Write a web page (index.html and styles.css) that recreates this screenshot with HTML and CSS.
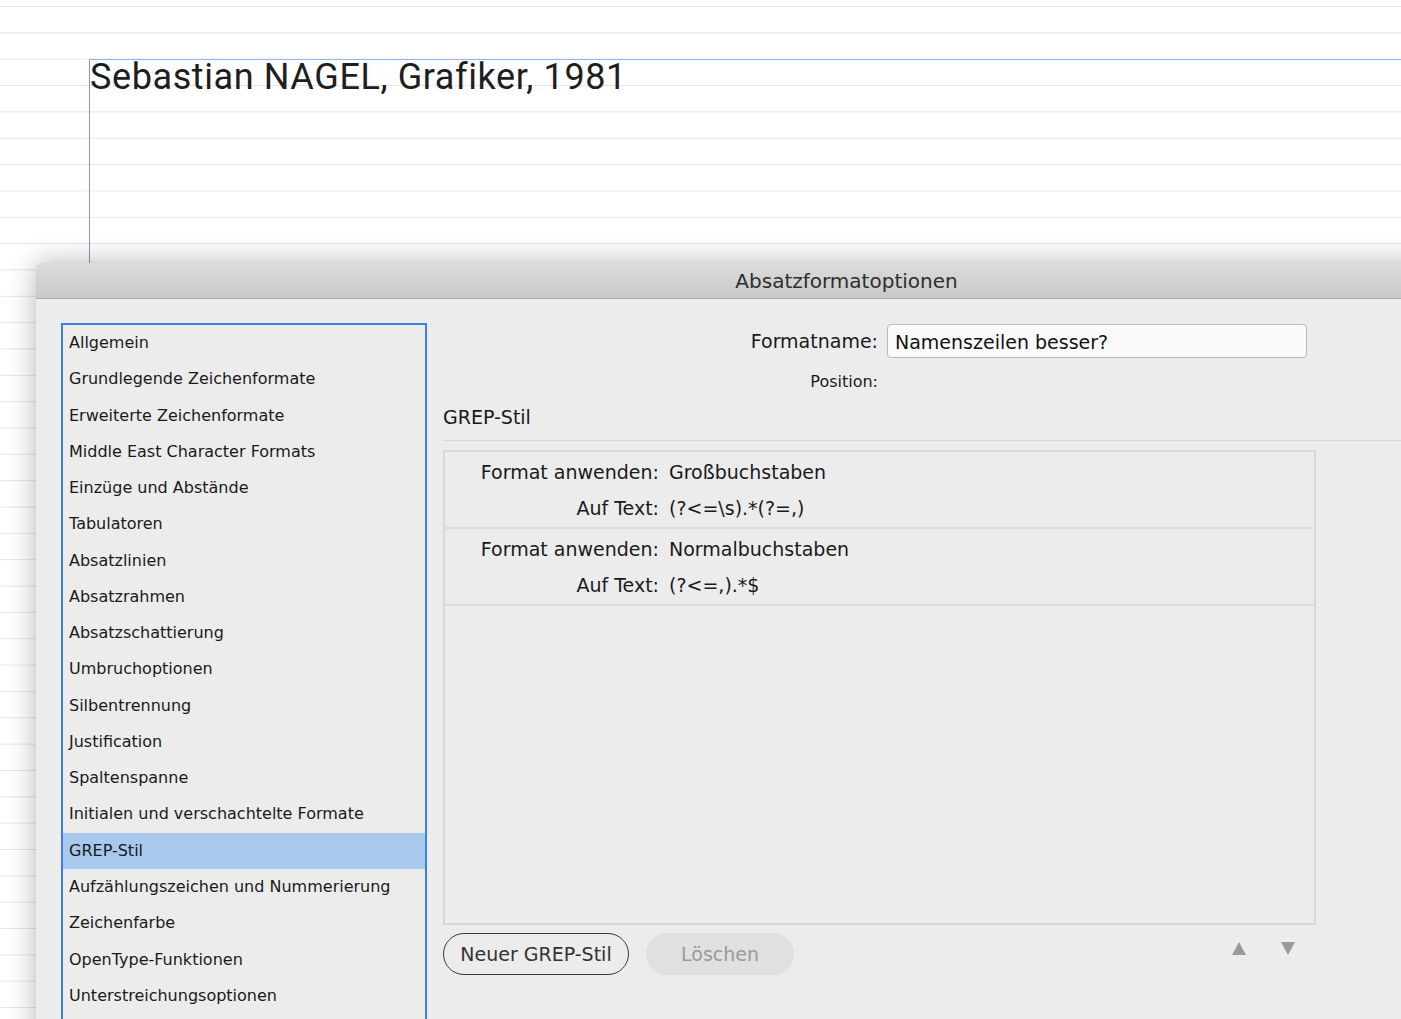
FILE: index.html
```html
<!DOCTYPE html>
<html lang="de">
<head>
    <meta charset="UTF-8">
    <meta name="viewport" content="width=device-width, initial-scale=1.0">
    <title>Absatzformatoptionen</title>
    <link rel="stylesheet" href="styles.css">
</head>
<body>
    <div class="page">
        <div class="text-frame">
            <p class="frame-text">Sebastian NAGEL, Grafiker, 1981</p>
        </div>

        <div class="dialog">
            <div class="title-bar">Absatzformatoptionen</div>
            <div class="dialog-body">
                <ul class="category-list">
                    <li>Allgemein</li>
                    <li>Grundlegende Zeichenformate</li>
                    <li>Erweiterte Zeichenformate</li>
                    <li>Middle East Character Formats</li>
                    <li>Einzüge und Abstände</li>
                    <li>Tabulatoren</li>
                    <li>Absatzlinien</li>
                    <li>Absatzrahmen</li>
                    <li>Absatzschattierung</li>
                    <li>Umbruchoptionen</li>
                    <li>Silbentrennung</li>
                    <li>Justification</li>
                    <li>Spaltenspanne</li>
                    <li>Initialen und verschachtelte Formate</li>
                    <li class="selected">GREP-Stil</li>
                    <li>Aufzählungszeichen und Nummerierung</li>
                    <li>Zeichenfarbe</li>
                    <li>OpenType-Funktionen</li>
                    <li>Unterstreichungsoptionen</li>
                </ul>

                <div class="settings">
                    <div class="name-row">
                        <label for="format-name">Formatname:</label>
                        <input type="text" id="format-name" value="Namenszeilen besser?">
                    </div>
                    <div class="position-row">
                        <span class="position-label">Position:</span>
                    </div>

                    <h2 class="section-title">GREP-Stil</h2>

                    <div class="grep-table">
                        <div class="grep-rule">
                            <div class="rule-line">
                                <span class="rule-label">Format anwenden:</span>
                                <span class="rule-value">Großbuchstaben</span>
                            </div>
                            <div class="rule-line">
                                <span class="rule-label">Auf Text:</span>
                                <span class="rule-value">(?&lt;=\s).*(?=,)</span>
                            </div>
                        </div>
                        <div class="grep-rule">
                            <div class="rule-line">
                                <span class="rule-label">Format anwenden:</span>
                                <span class="rule-value">Normalbuchstaben</span>
                            </div>
                            <div class="rule-line">
                                <span class="rule-label">Auf Text:</span>
                                <span class="rule-value">(?&lt;=,).*$</span>
                            </div>
                        </div>
                    </div>

                    <div class="button-row">
                        <button class="btn btn-new">Neuer GREP-Stil</button>
                        <button class="btn btn-delete" disabled>Löschen</button>
                        <div class="order-arrows">
                            <span class="arrow arrow-up"></span>
                            <span class="arrow arrow-down"></span>
                        </div>
                    </div>
                </div>
            </div>
        </div>
    </div>
</body>
</html>
```

FILE: styles.css
```css
html, body {
    margin: 0;
    padding: 0;
    height: 100%;
    overflow: hidden;
}
body {
    font-family: 'DejaVu Sans', 'Liberation Sans', sans-serif;
    color: #222;
    background-color: #fff;
    background-image: linear-gradient(to bottom, #e6e6e6 1px, transparent 1px);
    background-size: 100% 26.35px;
    background-position: 0 6px;
}
.page {
    padding-top: 59px;
}
.text-frame {
    margin-left: 89px;
    height: 203px;
    border-top: 1px solid #8fb4f2;
    border-left: 1px solid #7a9ccc;
}
.frame-text {
    margin: 0;
    font-family: 'Roboto', sans-serif;
    font-size: 36px;
    line-height: 34px;
    color: #1e1e1e;
    letter-spacing: 0.6px;
}
.dialog {
    margin-left: 36px;
    width: 1420px;
    height: 800px;
    background: #ececec;
    border-radius: 6px 6px 0 0;
    box-shadow: 0 0 28px rgba(0, 0, 0, 0.3);
}
.title-bar {
    height: 35px;
    line-height: 37px;
    text-align: center;
    width: 1621px;
    font-size: 20px;
    color: #2e2e2e;
    background: linear-gradient(to bottom, #dcdcdc, #c9c9c9);
    border-radius: 6px 6px 0 0;
    border-bottom: 1px solid #ababab;
}
.dialog-body {
    display: flex;
    gap: 16px;
    padding: 24px 0 0 25px;
}
.category-list {
    list-style: none;
    margin: 0;
    padding: 0;
    width: 362px;
    height: 760px;
    border: 2px solid #3c7fe2;
    flex-shrink: 0;
}
.category-list li {
    height: 36.27px;
    line-height: 36px;
    padding-left: 6px;
    font-size: 16px;
    color: #1a1a1a;
    white-space: nowrap;
}
.category-list li.selected {
    background: #a8c8ee;
}
.settings {
    width: 960px;
    flex-shrink: 0;
}
.name-row {
    display: flex;
    align-items: center;
    gap: 9px;
    margin-top: 1px;
}
.name-row label {
    width: 435px;
    text-align: right;
    font-size: 19px;
    color: #1a1a1a;
}
.name-row input {
    width: 420px;
    height: 34px;
    box-sizing: border-box;
    border: 1px solid #b9b9b9;
    border-radius: 4px;
    background: #fafafa;
    padding: 2px 7px 0;
    font-family: inherit;
    font-size: 19px;
    color: #111;
}
.position-row {
    margin-top: 14px;
    width: 435px;
    text-align: right;
    font-size: 16px;
    line-height: 20px;
    color: #1a1a1a;
}
.section-title {
    margin: 12px 0 0;
    font-size: 19px;
    font-weight: normal;
    line-height: 26px;
    color: #1a1a1a;
    padding-bottom: 10px;
    border-bottom: 1px solid #dadada;
}
.grep-table {
    margin-top: 9px;
    width: 873px;
    height: 475px;
    box-sizing: border-box;
    border: 2px solid #d8d8d8;
}
.grep-rule {
    padding: 1.5px 0;
    border-bottom: 2px solid #dcdcdc;
}
.rule-line {
    display: flex;
    gap: 10px;
    height: 36px;
    line-height: 36px;
    font-size: 19px;
    color: #1a1a1a;
}
.rule-label {
    width: 214px;
    text-align: right;
}
.button-row {
    display: flex;
    align-items: center;
    gap: 17px;
    width: 873px;
    margin-top: 8px;
}
.btn {
    height: 42px;
    border-radius: 21px;
    font-family: inherit;
    font-size: 19px;
    padding: 0;
}
.btn-new {
    width: 186px;
    background: transparent;
    border: 1.5px solid #3a3a3a;
    color: #333;
}
.btn-delete {
    width: 148px;
    background: #e0e0e0;
    border: none;
    color: #9a9a9a;
}
.order-arrows {
    margin-left: auto;
    margin-right: 21px;
    margin-top: -12px;
    display: flex;
    gap: 35px;
}
.arrow {
    width: 0;
    height: 0;
    border-left: 7px solid transparent;
    border-right: 7px solid transparent;
}
.arrow-up {
    border-bottom: 13px solid #9a9a9a;
}
.arrow-down {
    border-top: 13px solid #9a9a9a;
}
```
